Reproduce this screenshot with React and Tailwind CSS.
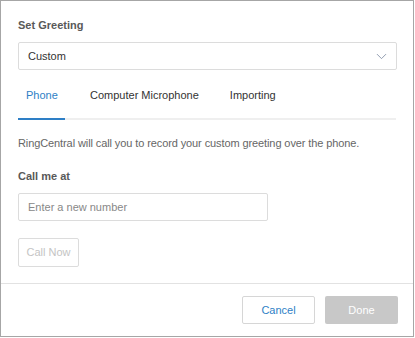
import { ChevronDown } from 'lucide-react'

export default function App() {
  return (
    <div className="w-[415px] h-[338px] bg-white font-['Liberation_Sans',Arial,sans-serif]">
      <div className="w-[414px] h-[337px] border border-[#a6a6a6] flex flex-col">
        <div className="px-[17px] pt-[17px] flex-1">
          <p className="text-[11px] font-bold text-[#595959] leading-[14px]">Set Greeting</p>
          <div className="mt-[10px] h-[28px] w-[379px] border border-[#dcdcdc] rounded-[2px] flex items-center justify-between pl-[9px] pr-[6px]">
            <span className="text-[11px] text-[#333]">Custom</span>
            <ChevronDown size={17} strokeWidth={1.2} className="text-[#7f8da3]" />
          </div>

          <div className="mt-[18px] flex text-[11px] leading-[14px]">
            <div className="w-[47px] pl-[8px] pb-[16px] border-b-2 border-[#2e7fc6] text-[#2e7fc6]">Phone</div>
            <div className="flex-1 flex border-b-2 border-[#efefef]">
              <span className="ml-[25px] text-[#333]">Computer Microphone</span>
              <span className="ml-[31px] text-[#333]">Importing</span>
            </div>
          </div>

          <p className="mt-[16px] text-[11px] leading-[14px] text-[#666] tracking-[-0.1px]">
            RingCentral will call you to record your custom greeting over the phone.
          </p>
          <p className="mt-[19px] text-[11px] font-bold leading-[14px] text-[#595959]">Call me at</p>
          <div className="mt-[10px] h-[28px] w-[250px] border border-[#dcdcdc] rounded-[2px] flex items-center px-[9px]">
            <span className="text-[11px] text-[#888]">Enter a new number</span>
          </div>
          <button className="mt-[17px] h-[29px] w-[61px] border border-[#dcdcdc] rounded-[2px] text-[11px] text-[#c4c4c4] bg-white">
            Call Now
          </button>
        </div>
        <div className="h-[53px] border-t border-[#e2e2e2] flex items-center justify-end gap-[10px] pr-[15px]">
          <button className="h-[28px] w-[73px] border border-[#d6d6d6] rounded-[2px] bg-white text-[11px] text-[#2e7fc6]">Cancel</button>
          <button className="h-[28px] w-[73px] rounded-[2px] bg-[#c8c8c8] text-[11px] text-white">Done</button>
        </div>
      </div>
    </div>
  )
}
